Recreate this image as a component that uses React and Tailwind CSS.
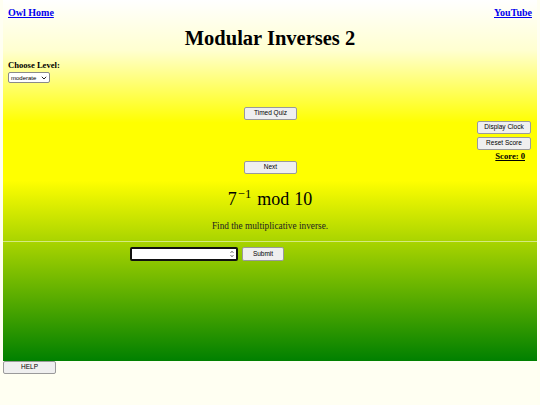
import React from "react";

const btn =
  "h-[13px] rounded-[2px] border border-[#9a9a9a] bg-[#efefef] text-[6.5px] leading-none text-black flex items-center justify-center";

export default function App() {
  return (
    <div
      className="w-[540px] h-[405px] bg-[#fffff2] overflow-hidden"
      style={{ fontFamily: '"Liberation Serif", "Times New Roman", serif' }}
    >
      <div className="mx-[3px] h-[361px] bg-[linear-gradient(180deg,#ffffff_0%,#ffffd0_14%,#ffff00_34%,#ffff00_50%,#008000_100%)] flex flex-col">
        <div className="flex justify-between px-[5px] pt-[7px]">
          <a className="text-[10px] font-bold text-[#0000ee] underline leading-[12px]">Owl Home</a>
          <a className="text-[10px] font-bold text-[#0000ee] underline leading-[12px]">YouTube</a>
        </div>
        <h1 className="text-center text-[20.5px] font-bold text-black leading-[24px] mt-[7px]">
          Modular Inverses 2
        </h1>
        <div className="px-[5px] mt-[10px]">
          <div className="text-[8.6px] font-bold leading-[10px] text-black">Choose Level:</div>
          <div
            className="mt-[2px] w-[42px] h-[11px] bg-white border border-[#8a8a8a] rounded-[2px] flex items-center justify-between px-[2px]"
            style={{ fontFamily: '"Liberation Sans", Arial, sans-serif' }}
          >
            <span className="text-[6px] leading-none text-black">moderate</span>
            <svg width="6" height="4" viewBox="0 0 6 4">
              <path d="M0.8 0.8 L3 3 L5.2 0.8" fill="none" stroke="#222" strokeWidth="1" />
            </svg>
          </div>
        </div>
        <div
          className="flex flex-col"
          style={{ fontFamily: '"Liberation Sans", Arial, sans-serif' }}
        >
          <div className="flex justify-center mt-[24px]">
            <button className={`${btn} w-[53px] ml-[1px]`}>Timed Quiz</button>
          </div>
          <div className="flex flex-col items-end pr-[6px] mt-[1px]">
            <button className={`${btn} w-[54px]`}>Display Clock</button>
            <button className={`${btn} w-[54px] mt-[3px]`}>Reset Score</button>
            <a
              className="mt-[2px] mr-[6px] text-[8.6px] font-bold underline text-black leading-[9px]"
              style={{ fontFamily: '"Liberation Serif", "Times New Roman", serif' }}
            >
              Score: 0
            </a>
          </div>
          <div className="flex justify-center">
            <button className={`${btn} w-[53px] ml-[1px]`}>Next</button>
          </div>
        </div>
        <div className="flex justify-center mt-[14px] text-[18px] leading-[22px] text-black">
          <span className="flex items-baseline">
            <span>7</span>
            <span className="text-[12.5px] relative -top-[7px] ml-[1px]">−1</span>
            <span className="ml-[6px]">mod</span>
            <span className="ml-[5px]">10</span>
          </span>
        </div>
        <div className="text-center text-[9.3px] leading-[11px] mt-[9px] text-[#222]">
          Find the multiplicative inverse.
        </div>
        <div className="mt-[9px] h-px bg-white/50" />
        <div className="flex items-center mt-[5px] pl-[127px] gap-[4px]" style={{ fontFamily: '"Liberation Sans", Arial, sans-serif' }}>
          <div className="w-[108px] h-[14px] bg-white border-2 border-[#111] rounded-[2px] flex items-center justify-end pr-[2px]">
            <svg width="4" height="8" viewBox="0 0 4 8">
              <path d="M0.5 3 L2 1.2 L3.5 3" fill="none" stroke="#555" strokeWidth="0.8" />
              <path d="M0.5 5 L2 6.8 L3.5 5" fill="none" stroke="#555" strokeWidth="0.8" />
            </svg>
          </div>
          <button className={`${btn} w-[42px] h-[14px]`}>Submit</button>
        </div>
      </div>
      <div className="pl-[3px]" style={{ fontFamily: '"Liberation Sans", Arial, sans-serif' }}>
        <button className={`${btn} w-[53px] h-[12px]`}>HELP</button>
      </div>
    </div>
  );
}
